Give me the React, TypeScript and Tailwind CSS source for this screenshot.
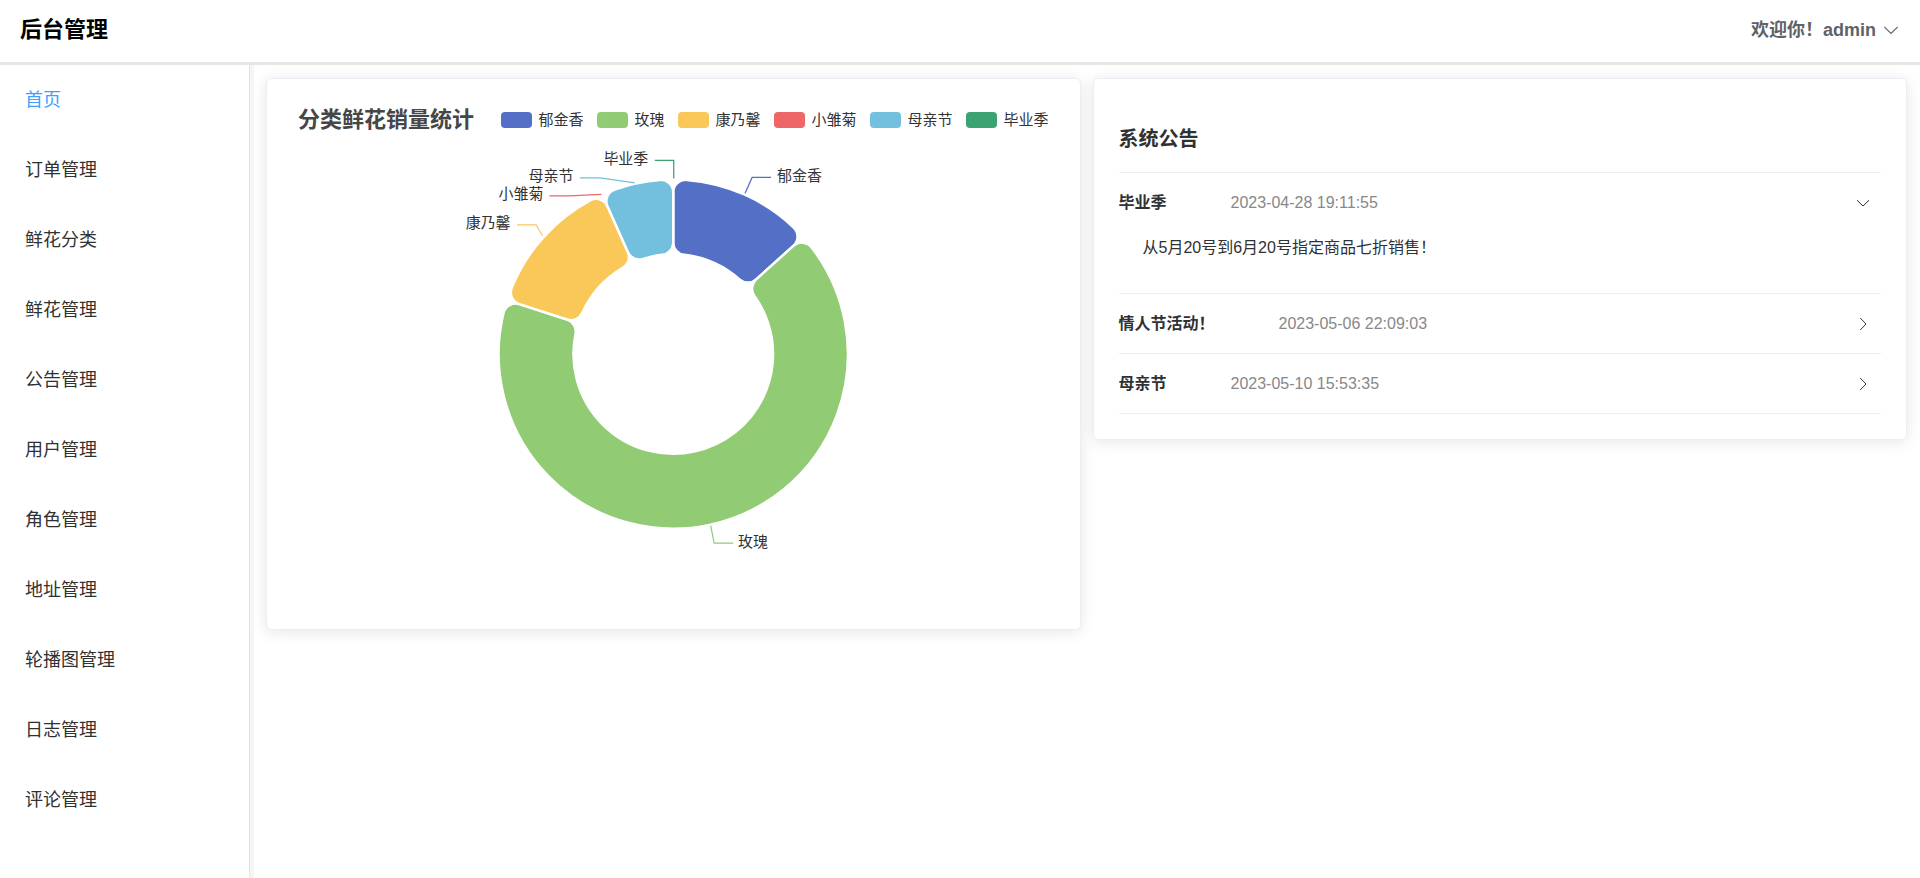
import { useState } from "react";

const menu = [
  "首页",
  "订单管理",
  "鲜花分类",
  "鲜花管理",
  "公告管理",
  "用户管理",
  "角色管理",
  "地址管理",
  "轮播图管理",
  "日志管理",
  "评论管理",
];

type Slice = {
  name: string;
  value: number;
  color: string;
  line: string;
  label: [number, number];
  side: "start" | "end";
};

// Coordinates are relative to the centre of the ring.
const slices: Slice[] = [
  { name: "郁金香", value: 2, color: "#5470c6", line: "72,-161 79,-177 98,-177", label: [104, -178], side: "start" },
  { name: "玫瑰", value: 10, color: "#91cc75", line: "37.5,172 41,189.5 60,189.5", label: [65, 188], side: "start" },
  { name: "康乃馨", value: 2, color: "#fac858", line: "-131,-118.5 -137.5,-129.5 -156.5,-129.5", label: [-163, -131], side: "end" },
  { name: "小雏菊", value: 0, color: "#ee6666", line: "-72,-160 -105,-158.5 -124,-158.5", label: [-130, -160], side: "end" },
  { name: "母亲节", value: 1, color: "#73c0de", line: "-38.5,-171.5 -73.5,-176.5 -93.5,-176.5", label: [-100, -178], side: "end" },
  { name: "毕业季", value: 0, color: "#3ba272", line: "0.5,-176 0.5,-194 -18.5,-194", label: [-25, -195], side: "end" },
];

const OUTER = 175;
const INNER = 100;
const CORNER = 12.5;

function polar(radius: number, angle: number) {
  return `${(radius * Math.sin(angle)).toFixed(3)} ${(-radius * Math.cos(angle)).toFixed(3)}`;
}

// Ring sector whose four corners are rounded with arcs tangent to its edges.
function sectorPath(a0: number, a1: number) {
  const outerOffset = Math.asin(CORNER / (OUTER - CORNER));
  const innerOffset = Math.asin(CORNER / (INNER + CORNER));
  const outerEdge = Math.sqrt((OUTER - CORNER) ** 2 - CORNER ** 2);
  const innerEdge = Math.sqrt((INNER + CORNER) ** 2 - CORNER ** 2);
  const large = a1 - a0 - 2 * outerOffset > Math.PI ? 1 : 0;
  const corner = `A ${CORNER} ${CORNER} 0 0 1`;
  return [
    `M ${polar(innerEdge, a0)}`,
    `L ${polar(outerEdge, a0)}`,
    `${corner} ${polar(OUTER, a0 + outerOffset)}`,
    `A ${OUTER} ${OUTER} 0 ${large} 1 ${polar(OUTER, a1 - outerOffset)}`,
    `${corner} ${polar(outerEdge, a1)}`,
    `L ${polar(innerEdge, a1)}`,
    `${corner} ${polar(INNER, a1 - innerOffset)}`,
    `A ${INNER} ${INNER} 0 ${large} 0 ${polar(INNER, a0 + innerOffset)}`,
    `${corner} ${polar(innerEdge, a0)}`,
    "Z",
  ].join(" ");
}

function Ring() {
  const total = slices.reduce((sum, s) => sum + s.value, 0);
  let angle = 0;
  const sectors = slices.map((s) => {
    const start = angle;
    angle += (s.value / total) * Math.PI * 2;
    return { ...s, start, end: angle };
  });
  return (
    <svg viewBox="-382 -218 764 468" className="block h-[468px] w-full" role="img" aria-label="分类鲜花销量统计">
      {sectors
        .filter((s) => s.value > 0)
        .map((s) => (
          <path key={s.name} d={sectorPath(s.start, s.end)} fill={s.color} stroke="#fff" strokeWidth="2.5" />
        ))}
      {slices.map((s) => (
        <g key={s.name}>
          <polyline points={s.line} fill="none" stroke={s.color} strokeWidth="1.25" />
          <text x={s.label[0]} y={s.label[1] + 5} textAnchor={s.side} className="fill-[#333] text-[15px]">
            {s.name}
          </text>
        </g>
      ))}
    </svg>
  );
}

const notices = [
  { title: "毕业季", time: "2023-04-28 19:11:55", body: "从5月20号到6月20号指定商品七折销售！" },
  { title: "情人节活动！", time: "2023-05-06 22:09:03", body: "情人节活动！" },
  { title: "母亲节", time: "2023-05-10 15:53:35", body: "母亲节" },
];

function Chevron({ open, className }: { open: boolean; className: string }) {
  return (
    <svg viewBox="0 0 16 16" className={className} fill="none" stroke="currentColor" strokeWidth="1" aria-hidden="true">
      <path d={open ? "M2 5.2 L8 11 L14 5.2" : "M5.2 2 L11 8 L5.2 14"} />
    </svg>
  );
}

function Notices() {
  const [openIndex, setOpenIndex] = useState(0);
  return (
    <div className="border-t border-[#ebeef5]">
      {notices.map((n, i) => {
        const open = i === openIndex;
        return (
          <div key={n.title} className="border-b border-[#ebeef5]">
            <button
              type="button"
              aria-expanded={open}
              onClick={() => setOpenIndex(open ? -1 : i)}
              className="flex h-[59px] w-full cursor-pointer items-center pr-2.5 text-left text-base text-[#303133]"
            >
              <span className="font-bold">{n.title}</span>
              <span className="ml-16 text-[#888]">{n.time}</span>
              <Chevron open={open} className="ml-auto size-4" />
            </button>
            {open && <p className="pb-[29px] pl-6 text-base leading-8 text-[#303133]">{n.body}</p>}
          </div>
        );
      })}
    </div>
  );
}

export default function App() {
  return (
    <div className="flex min-h-screen flex-col bg-white font-['Liberation_Sans','Noto_Sans_CJK_SC',sans-serif]">
      <header className="flex h-[65px] items-center justify-between border-b-[3px] border-[#e6e6e6] px-5 pb-0.5">
        <h1 className="text-[22px] leading-8 font-bold text-black">后台管理</h1>
        <button type="button" className="flex cursor-pointer items-center gap-1.5 text-lg font-bold text-[#606266]">
          欢迎你！admin
          <Chevron open className="size-[18px]" />
        </button>
      </header>
      <div className="flex flex-1">
        <nav className="w-[254px] shrink-0 border-r-4 border-[#f5f5f5]">
          <ul className="h-full border-r border-[#e4e4e4]">
            {menu.map((item, i) => (
              <li key={item}>
                <a
                  href="#"
                  aria-current={i === 0 ? "page" : undefined}
                  className={
                    i === 0
                      ? "flex h-[70px] items-center pl-[25px] text-lg text-[#409eff]"
                      : "flex h-[70px] items-center pl-[25px] text-lg text-[#303133]"
                  }
                >
                  {item}
                </a>
              </li>
            ))}
          </ul>
        </nav>
        <main className="grid flex-1 grid-cols-2 items-start gap-3 py-[13px] pr-[13px] pl-3">
          <section className="rounded-[5px] border border-[#ebeef5] bg-white p-[25px] shadow-[0_2px_15px_rgba(0,0,0,0.1)]">
            <div className="flex h-8 items-center justify-between px-1.5">
              <h2 className="text-[22px] leading-8 font-bold whitespace-nowrap text-[#464646]">分类鲜花销量统计</h2>
              <ul className="flex gap-3.5">
                {slices.map((s) => (
                  <li key={s.name} className="flex items-center gap-1.5 text-[15px] leading-5 whitespace-nowrap text-[#333]">
                    <svg viewBox="0 0 31 16" className="h-4 w-[31px]" aria-hidden="true">
                      <rect width="31" height="16" rx="4" fill={s.color} />
                    </svg>
                    {s.name}
                  </li>
                ))}
              </ul>
            </div>
            <Ring />
          </section>
          <section className="rounded-[5px] border border-[#ebeef5] bg-white p-[25px] shadow-[0_2px_15px_rgba(0,0,0,0.1)]">
            <h2 className="pt-5 pb-[18px] text-xl leading-[30px] font-bold text-[#303133]">系统公告</h2>
            <Notices />
          </section>
        </main>
      </div>
    </div>
  );
}
